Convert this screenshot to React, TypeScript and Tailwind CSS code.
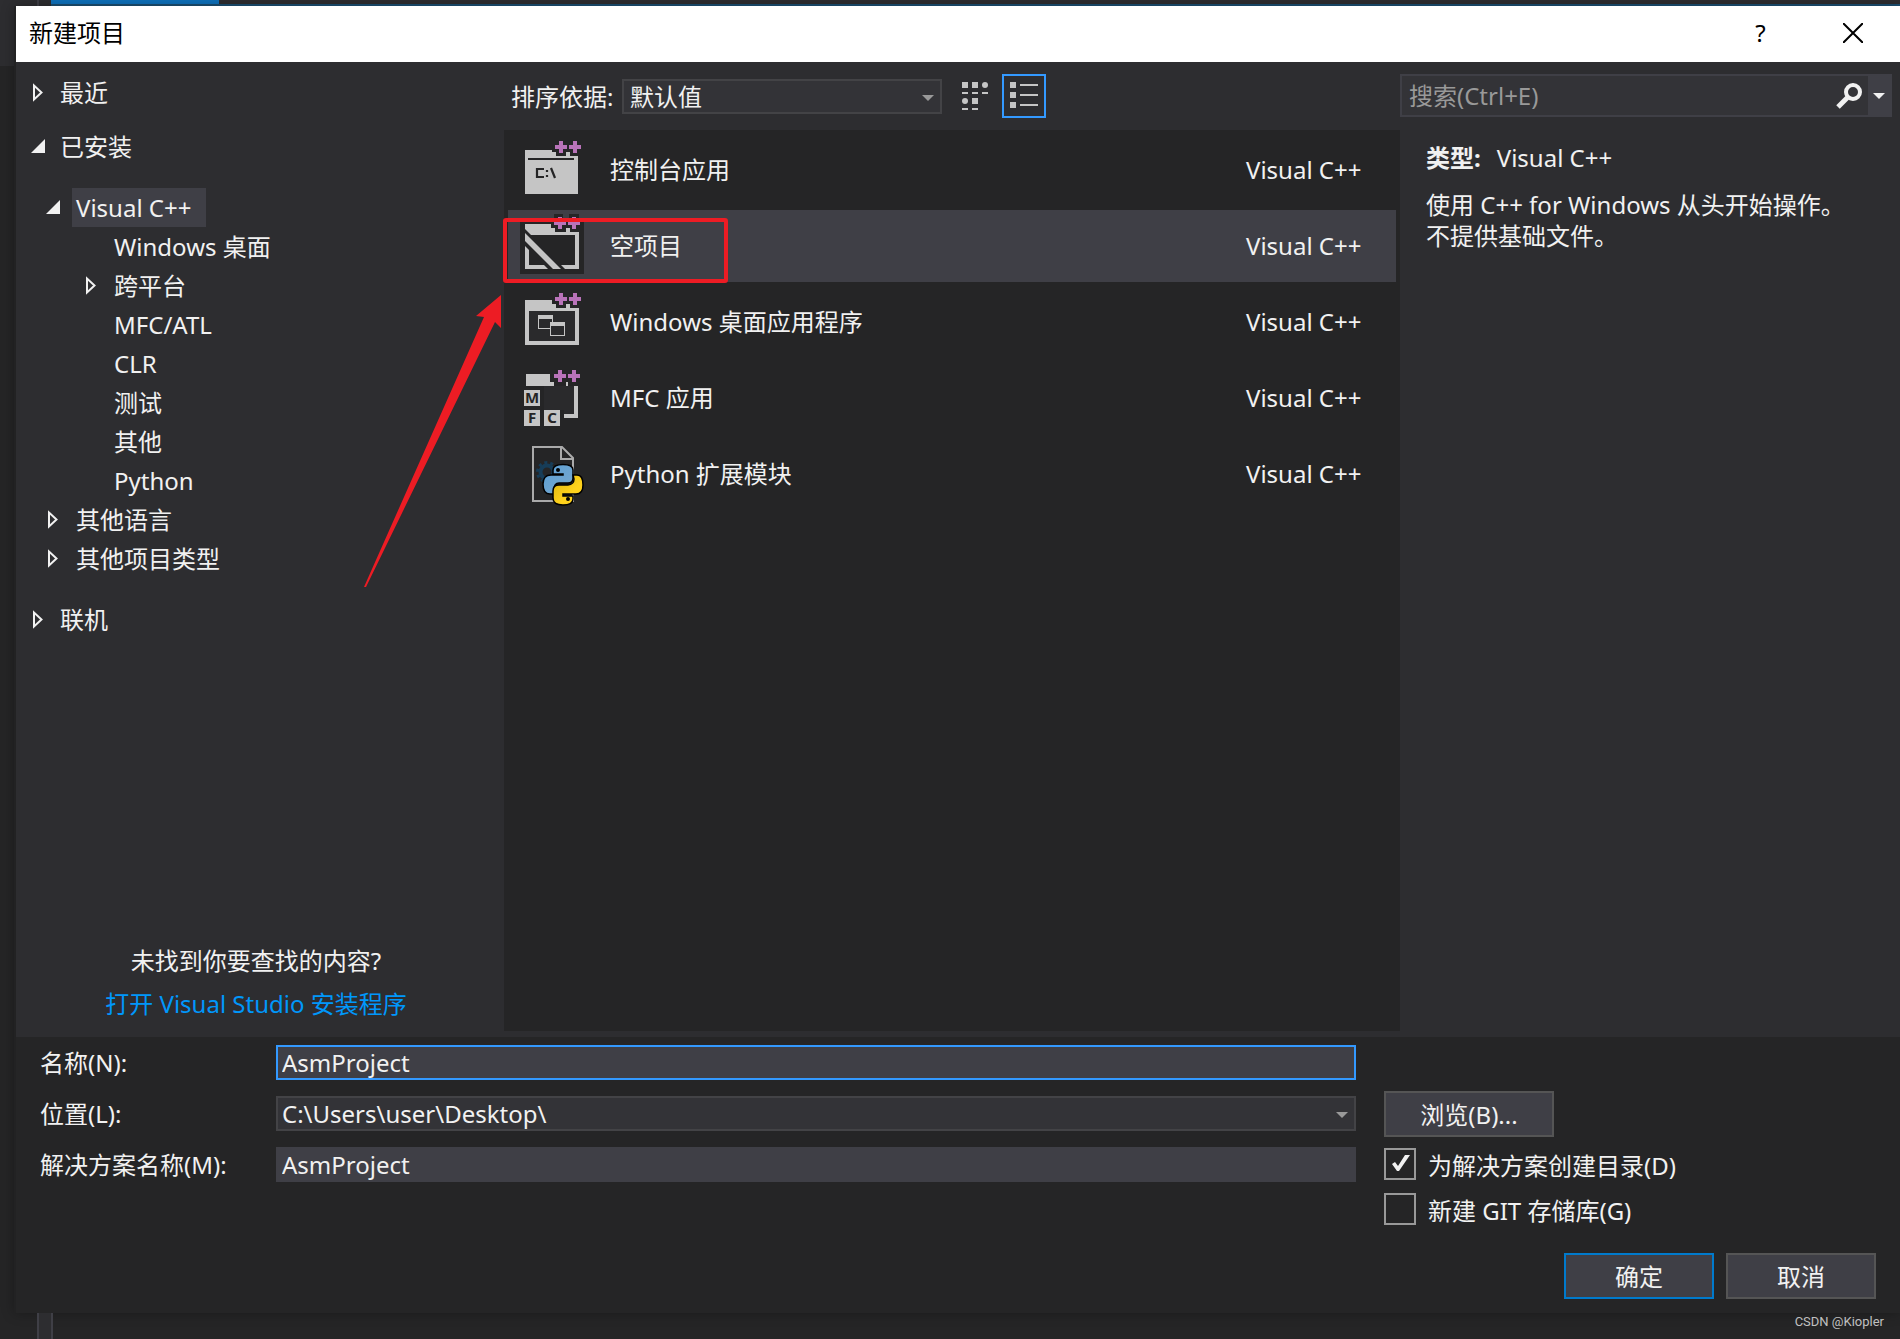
import React, { useState } from "react";

const treeRow = "flex items-center h-[39px]";

function Expander({ open }: { open?: boolean }) {
  return open ? (
    <svg width="16" height="20" viewBox="0 0 16 20" aria-hidden="true">
      <path d="M15 2V16H1Z" fill="#f1f1f1" />
    </svg>
  ) : (
    <svg width="16" height="20" viewBox="0 0 16 20" aria-hidden="true">
      <path d="M4 2.5V16.5L11.5 9.5Z" fill="none" stroke="#f1f1f1" strokeWidth="2" />
    </svg>
  );
}

function TreeItem({ label, level, state, selected }: { label: string; level: 0 | 1 | 2; state?: "open" | "closed"; selected?: boolean }) {
  const indent = level === 0 ? "pl-[14px]" : level === 1 ? "pl-[29px]" : "pl-[67px]";
  return (
    <li className={`${treeRow} ${indent}`}>
      <span className="w-4 shrink-0">{state && <Expander open={state === "open"} />}</span>
      <button type="button" className={`h-full whitespace-nowrap ${level === 0 ? "ml-[10px]" : "ml-[11px]"} ${selected ? "bg-[#3f3f46] pl-1 w-[134px] text-left" : "px-1"}`}>{label}</button>
    </li>
  );
}

function PlusPlus({ x, y }: { x: number; y: number }) {
  return (
    <path
      transform={`translate(${x} ${y})`}
      d="M4 0H8V4H12V8H8V12H4V8H0V4H4ZM18 0H22V4H26V8H22V12H18V8H14V4H18Z"
      fill="#b973b9"
    />
  );
}

function ConsoleIcon() {
  return (
    <svg width="64" height="72" viewBox="0 0 64 72" aria-hidden="true">
      <path d="M11 16H38V18H42V22H52V18H56V22H64V60H11Z" fill="#c5c5c5" />
      <path d="M14 24H60V26H14Z" fill="#252526" />
      <PlusPlus x={41} y={7} />
      <path d="M30 35H23V43H30M33 36V38M33 41V43M37 34L41 44" fill="none" stroke="#252526" strokeWidth="2.2" />
    </svg>
  );
}

function EmptyIcon() {
  return (
    <svg width="64" height="72" viewBox="0 0 64 72" aria-hidden="true">
      <path d="M6 12H40V4H49V8H55V4H65V12H70V64H6Z" fill="#252526" />
      <path d="M11 14H37V18H41V22H52V18H56V22H65V59H11ZM15 25V55H61V25Z" fill="#c5c5c5" fillRule="evenodd" />
      <path d="M11 19L51 59H34L11 36Z" fill="#252526" />
      <path d="M11 23L47 59H39L11 31Z" fill="#c5c5c5" />
      <PlusPlus x={40} y={7} />
    </svg>
  );
}

function DesktopIcon() {
  return (
    <svg width="64" height="72" viewBox="0 0 64 72" aria-hidden="true">
      <path d="M15 25H61V55H15Z" fill="#2a2a2c" />
      <path d="M11 14H38V18H42V22H52V18H56V22H65V59H11ZM15 25V55H61V25Z" fill="#c5c5c5" fillRule="evenodd" />
      <PlusPlus x={41} y={7} />
      <path d="M24 29H39V43H24ZM25 33V42H38V33Z" fill="#c5c5c5" fillRule="evenodd" />
      <path d="M36 36H51V50H36Z" fill="#c5c5c5" />
      <path d="M37 40H50V49H37Z" fill="#2a2a2c" />
    </svg>
  );
}

function MfcIcon() {
  return (
    <svg width="64" height="72" viewBox="0 0 64 72" aria-hidden="true">
      <path d="M12 12H36V20H40V24H12ZM60 24H64V56H50V52H60ZM52 20H54V24H52Z" fill="#c5c5c5" />
      <path d="M30 24H60V52H50V48H30Z" fill="#2a2a2c" />
      <PlusPlus x={40} y={8} />
      <path d="M10 28H26V44H10ZM10 48H26V64H10ZM30 48H46V64H30Z" fill="#c5c5c5" />
      <g fill="#252526" textAnchor="middle" className="text-[15px] font-bold font-['Noto_Sans',sans-serif]">
        <text x="18" y="41">M</text>
        <text x="18" y="61">F</text>
        <text x="38" y="61">C</text>
      </g>
    </svg>
  );
}

function PythonIcon() {
  return (
    <svg width="64" height="72" viewBox="0 0 64 72" aria-hidden="true">
      <defs>
        <linearGradient id="snakeBlue" x1="0" y1="0" x2="1" y2="1">
          <stop offset="0" stopColor="#5a9fd4" />
          <stop offset="1" stopColor="#7aa9cf" />
        </linearGradient>
        <linearGradient id="snakeYellow" x1="0" y1="0" x2="1" y2="1">
          <stop offset="0" stopColor="#d9b310" />
          <stop offset="0.6" stopColor="#ffd21c" />
        </linearGradient>
      </defs>
      <path d="M19 9H48L59 20V63H19Z" fill="none" stroke="#aaa" strokeWidth="2" />
      <path d="M47 9V21H59" fill="none" stroke="#aaa" strokeWidth="2" />
      <circle cx="33" cy="34" r="6.5" fill="none" stroke="#173d58" strokeWidth="4" />
      <circle cx="33" cy="34" r="9.5" fill="none" stroke="#173d58" strokeWidth="3" strokeDasharray="3 2.97" />
      <path d="M39 32C39 28 43 26.500 49 26.500S59 28 59 32V40C59 43 57 45 54 45H45C41 45 40 48 40 52V56H36C31 56 29 52 29 46S32 37 37 37H49V36H39Z" fill="url(#snakeBlue)" stroke="#000" strokeWidth="1.500" />
      <path d="M59 37H63C67 37 69 41 69 47S66 56 62 56H49V58H59V61C59 65 55 67 49 67S39 65 39 60V53C39 49 41 47 45 47H54C58 47 60 44 60 41Z" fill="url(#snakeYellow)" stroke="#000" strokeWidth="1.500" />
      <circle cx="44" cy="32" r="2" />
      <circle cx="54" cy="61" r="2" />
    </svg>
  );
}

const templates = [
  { name: "控制台应用", icon: <ConsoleIcon /> },
  { name: "空项目", icon: <EmptyIcon />, selected: true },
  { name: "Windows 桌面应用程序", icon: <DesktopIcon /> },
  { name: "MFC 应用", icon: <MfcIcon /> },
  { name: "Python 扩展模块", icon: <PythonIcon /> },
];

function DownArrow({ className }: { className: string }) {
  return (
    <svg className={className} width="12" height="6" viewBox="0 0 12 6" aria-hidden="true">
      <path d="M0 0H12L6 6Z" fill="currentColor" />
    </svg>
  );
}

function Check({ label, initial }: { label: string; initial: boolean }) {
  const [on, setOn] = useState(initial);
  return (
    <label className="flex items-center gap-3 h-[45px]">
      <span className="relative size-8 shrink-0">
        <input type="checkbox" checked={on} onChange={() => setOn(!on)} className="block appearance-none size-8 border-2 border-[#999] bg-[#252526]" />
        {on && (
          <svg className="absolute inset-0 pointer-events-none" width="32" height="32" viewBox="0 0 32 32" aria-hidden="true">
            <path d="M8 16L11 14L14 18L21 7H26L15 23H13Z" fill="#f1f1f1" />
          </svg>
        )}
      </span>
      <span className="pt-1">{label}</span>
    </label>
  );
}

const field = "w-full h-[35px] px-1 outline-none border-2";

export default function App() {
  return (
    <div className="relative flex flex-col min-h-screen bg-[#252526] text-[#f1f1f1] text-[24px] leading-[31px] font-['Noto_Sans','Noto_Sans_CJK_SC',sans-serif]">
      <div className="flex h-[6px] bg-[#2d2d30]">
        <div className="w-[37px]" />
        <div className="w-[14px] border-l-2 border-[#3f3f46]" />
        <div className="flex-1 border-b-2 border-[#1b4f72]">
          <div className="w-[168px] h-1 bg-[#0e72bd]" />
        </div>
      </div>

      <div className="flex flex-1">
        <div className="w-[14px] shrink-0">
          <div className="h-[60px] bg-[#2d2d30]" />
        </div>
        <main className="flex flex-col flex-1 min-w-0 border-l-2 border-[#222223] shadow-[0_0_12px_rgba(0,0,0,0.3)]">
          <header className="flex items-center h-14 bg-white text-black pl-[13px] pb-[3px]">
            <h1 className="flex-1">新建项目</h1>
            <button type="button" aria-label="帮助" className="w-[91px] h-full">?</button>
            <button type="button" aria-label="关闭" className="flex items-center justify-center w-[94px] h-full">
              <svg width="20" height="20" viewBox="0 0 20 20" aria-hidden="true">
                <path d="M0 0L20 20M20 0L0 20" stroke="#000" strokeWidth="2" />
              </svg>
            </button>
          </header>

          <div className="flex flex-1 bg-[#2d2d30] pb-[6px]">
            <nav className="flex flex-col w-[488px] shrink-0 pt-[11px]">
              <ul>
                <TreeItem label="最近" level={0} state="closed" />
              </ul>
              <ul className="pt-[15px]">
                <TreeItem label="已安装" level={0} state="open" />
              </ul>
              <ul className="pt-[22px]">
                <TreeItem label="Visual C++" level={1} state="open" selected />
                <TreeItem label="Windows 桌面" level={2} />
                <TreeItem label="跨平台" level={2} state="closed" />
                <TreeItem label="MFC/ATL" level={2} />
                <TreeItem label="CLR" level={2} />
                <TreeItem label="测试" level={2} />
                <TreeItem label="其他" level={2} />
                <TreeItem label="Python" level={2} />
                <TreeItem label="其他语言" level={1} state="closed" />
                <TreeItem label="其他项目类型" level={1} state="closed" />
              </ul>
              <ul className="pt-[22px]">
                <TreeItem label="联机" level={0} state="closed" />
              </ul>
              <div className="mt-auto flex flex-col items-center gap-3 pr-2 pb-3">
                <p>未找到你要查找的内容?</p>
                <a href="#" className="text-[#0097fb]">打开 Visual Studio 安装程序</a>
              </div>
            </nav>

            <section className="flex flex-col flex-1 min-w-0">
              <div className="flex items-center h-[68px] pl-[7px]">
                <label htmlFor="sort" className="w-[111px]">排序依据:</label>
                <div className="relative w-80">
                  <select id="sort" className="block w-full h-[35px] appearance-none border-2 border-[#434346] bg-[#333337] px-[6px] leading-[31px] outline-none">
                    <option>默认值</option>
                  </select>
                  <DownArrow className="absolute right-2 top-4 text-[#999] pointer-events-none" />
                </div>
                <button type="button" aria-label="小图标" className="flex items-center justify-center size-11 ml-3">
                  <svg width="28" height="28" viewBox="0 0 28 28" fill="#c5c5c5" aria-hidden="true">
                    <path d="M0 0H6V6H0ZM10 0H16V6H10ZM0 10H6V12H0ZM10 10H16V12H10ZM20 10H26V12H20ZM10 16H16V22H10ZM0 26H6V28H0ZM10 26H16V28H10Z" />
                    <circle cx="23" cy="3" r="3" />
                    <circle cx="3" cy="19" r="3" />
                  </svg>
                </button>
                <button type="button" aria-label="列表" aria-pressed="true" className="flex items-start size-11 ml-1 border-2 border-[#3399ff] pl-[6px] pt-[6px]">
                  <svg width="28" height="28" viewBox="0 0 28 28" fill="#c5c5c5" aria-hidden="true">
                    <path d="M0 0H6V6H0ZM10 2H28V4H10ZM0 10H6V16H0ZM10 12H28V14H10ZM0 20H6V26H0ZM10 22H28V24H10Z" />
                  </svg>
                </button>
              </div>
              <ul className="flex flex-col flex-1 gap-1 p-1 bg-[#252526]">
                {templates.map((t) => (
                  <li key={t.name}>
                    <button type="button" className={`flex items-center w-full h-[72px] text-left pr-[23px] ${t.selected ? "bg-[#3f3f46]" : ""}`}>
                      <span className="w-[102px] [&>svg]:overflow-visible [&>svg]:ml-[6px]">{t.icon}</span>
                      <span className="flex-1 pb-[2px]">{t.name}</span>
                      <span className="w-[127px] pb-[2px]">Visual C++</span>
                    </button>
                  </li>
                ))}
              </ul>
            </section>

            <aside className="w-[500px] shrink-0 pt-3 pr-2">
              <div className="flex h-[43px] border-2 border-[#3f3f46] bg-[#333337]">
                <input type="search" aria-label="搜索" placeholder="搜索(Ctrl+E)" className="flex-1 min-w-0 pl-[7px] outline-none placeholder:text-[#999]" />
                <button type="button" aria-label="搜索" className="px-[6px]">
                  <svg width="26" height="26" viewBox="0 0 26 26" aria-hidden="true">
                    <circle cx="17" cy="9" r="7" fill="none" stroke="#f1f1f1" strokeWidth="4" />
                    <path d="M12 14L2 24" stroke="#f1f1f1" strokeWidth="5" />
                  </svg>
                </button>
                <button type="button" aria-label="搜索选项" className="flex items-center justify-center w-[22px] bg-[#3f3f46]">
                  <DownArrow className="text-[#f1f1f1]" />
                </button>
              </div>
              <div className="pl-[26px] pt-[25px]">
                <p className="flex gap-4"><b>类型:</b><span>Visual C++</span></p>
                <p className="mt-4 pr-[30px]">使用 C++ for Windows 从头开始操作。不提供基础文件。</p>
              </div>
            </aside>
          </div>

          <form className="h-[276px] bg-[#252526] pl-6 pr-2 pt-2" onSubmit={(e) => e.preventDefault()}>
            <div className="flex">
              <div className="flex flex-col gap-4 flex-1">
                <div className="flex items-center">
                  <label htmlFor="name" className="w-[236px] shrink-0">名称(N):</label>
                  <input id="name" defaultValue="AsmProject" className={`${field} border-[#3399ff] bg-[#3f3f46]`} />
                </div>
                <div className="flex items-center">
                  <label htmlFor="location" className="w-[236px] shrink-0">位置(L):</label>
                  <div className="relative w-full">
                    <select id="location" className={`${field} block appearance-none border-[#434346] bg-[#333337] leading-[31px]`}>
                      <option>C:\Users\user\Desktop\</option>
                    </select>
                    <DownArrow className="absolute right-2 top-4 text-[#999] pointer-events-none" />
                  </div>
                </div>
                <div className="flex items-center">
                  <label htmlFor="solution" className="w-[236px] shrink-0">解决方案名称(M):</label>
                  <input id="solution" defaultValue="AsmProject" className={`${field} border-[#3f3f46] bg-[#3f3f46]`} />
                </div>
              </div>
              <div className="w-[508px] ml-7 pt-[46px]">
                <button type="button" className="w-[170px] h-[46px] mb-1 border-2 border-[#555] bg-[#3f3f46]">浏览(B)...</button>
                <Check label="为解决方案创建目录(D)" initial />
                <Check label="新建 GIT 存储库(G)" initial={false} />
              </div>
            </div>
            <div className="flex justify-end gap-3 pr-4 pt-[22px]">
              <button type="submit" className="w-[150px] h-[46px] border-2 border-[#007acc] bg-[#3f3f46]">确定</button>
              <button type="button" className="w-[150px] h-[46px] border-2 border-[#555] bg-[#3f3f46]">取消</button>
            </div>
          </form>
        </main>
      </div>

      <footer className="flex h-[26px] pl-[37px] pr-4">
        <div className="w-4 border-x-2 border-[#3f3f46] bg-[#2d2d30]" />
        <p className="ml-auto text-[13px] leading-[18px] text-[#c0c0c0] font-['Roboto',sans-serif]">CSDN @Kiopler</p>
      </footer>

      <svg className="absolute left-[360px] top-[214px] pointer-events-none" width="372" height="376" viewBox="360 214 372 376" aria-hidden="true">
        <rect x="505" y="220" width="221" height="61" rx="1" fill="none" stroke="#ed1c24" strokeWidth="4" />
        <path d="M364 587L484 317L476 316L501 295V328L495 322L366 587Z" fill="#ed1c24" />
      </svg>
    </div>
  );
}
